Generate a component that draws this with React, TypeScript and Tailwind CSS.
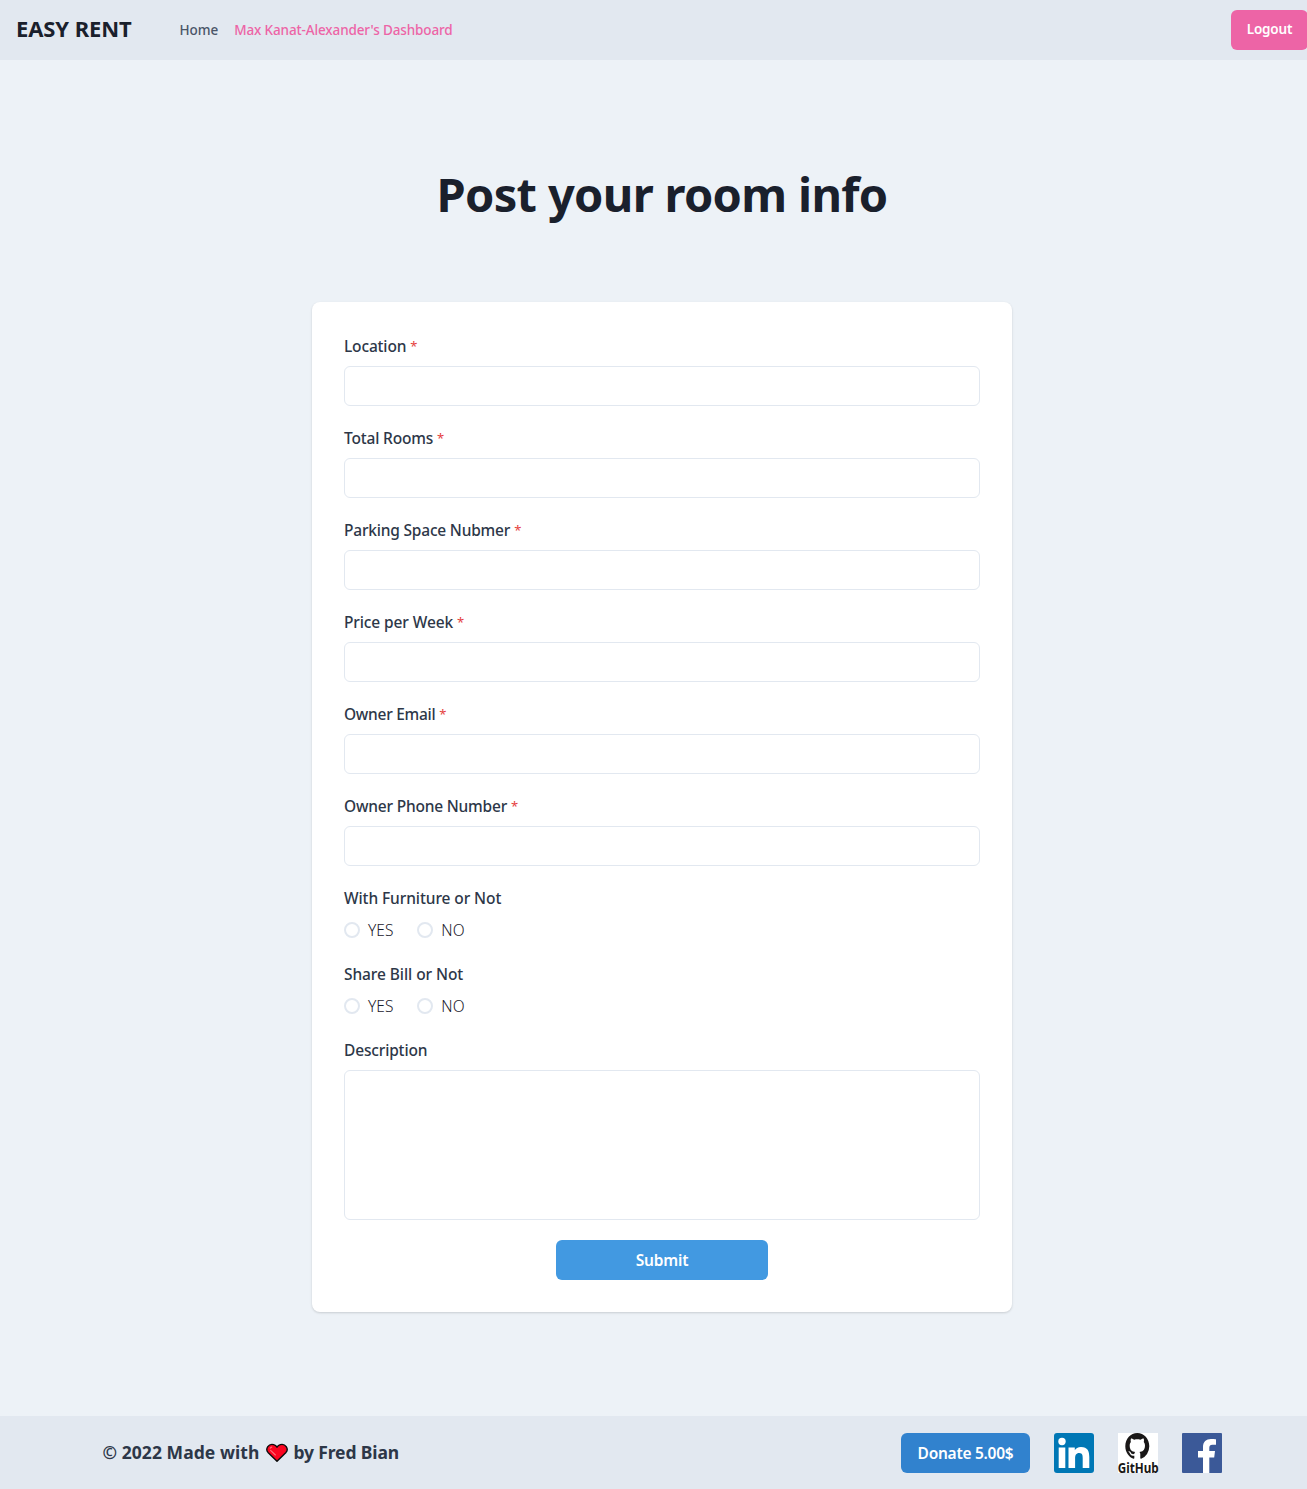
const fields = [
  { label: "Location", spacing: "tracking-[-0.16px]" },
  { label: "Total Rooms", spacing: "tracking-[-0.18px]" },
  { label: "Parking Space Nubmer", spacing: "tracking-[-0.2px]" },
  { label: "Price per Week", spacing: "tracking-[-0.11px]" },
  { label: "Owner Email", spacing: "tracking-[-0.28px]" },
  { label: "Owner Phone Number", spacing: "tracking-[-0.2px]" },
];

const choices = [
  { label: "With Furniture or Not", spacing: "tracking-[-0.09px]" },
  { label: "Share Bill or Not", spacing: "tracking-[-0.08px]" },
];

function Label({ text, spacing, required }: { text: string; spacing: string; required?: boolean }) {
  return (
    <div className="flex h-6 items-center whitespace-nowrap text-[15.5px] font-medium leading-6 text-[#2d3748]">
      <span className={spacing}>{text}</span>
      {required && <span className="ml-1 text-[13px] font-normal text-[#e53e3e]">*</span>}
    </div>
  );
}

function Radio({ text }: { text: string }) {
  return (
    <label className="flex h-6 items-center gap-2 text-[#1a202c]">
      <span className="size-4 rounded-full border-2 border-[#e2e8f0]" />
      <span className="pt-px text-[15.5px] font-light">{text}</span>
    </label>
  );
}

function Heart() {
  return (
    <svg viewBox="0 0 22 20" className="ml-[7px] mr-[5px] h-5 w-[22px]" aria-label="heart">
      <path
        d="M11 18.3 2 9.4C.7 7.9.6 5.3 1.8 3.6 3.2 1.6 5.6 1.1 7.6 1.6 9.2 2 10.3 3 11 4.2 11.7 3 12.8 2 14.4 1.6c2-.5 4.4 0 5.8 2 1.2 1.7 1.1 4.3-.2 5.8Z"
        fill="#fb0520"
        stroke="#0b0b0b"
        strokeWidth="1.4"
        strokeLinejoin="round"
      />
      <path d="M4.2 5.2c.3-.6.8-1 1.5-1.1M4.6 7.4l4.8 4.6" fill="none" stroke="#ff6f78" strokeWidth="1.1" strokeLinecap="round" />
    </svg>
  );
}

function LinkedIn() {
  return (
    <svg viewBox="0 0 40 40" className="size-10" aria-label="LinkedIn">
      <rect width="40" height="40" rx="3" fill="#0077b5" />
      <circle cx="8" cy="8.5" r="3.7" fill="#fff" />
      <path
        d="M4.7 14.5h6.6V35H4.7zM14.5 14.5h6.3v2.7c1-1.8 3.1-3.3 6.2-3.3 6.7 0 8.3 4.2 8.3 10V35h-6.6v-9.8c0-2.5-.1-5.3-3.4-5.3s-4.2 2.5-4.2 5.1V35h-6.6z"
        fill="#fff"
      />
    </svg>
  );
}

function GitHub() {
  return (
    <svg viewBox="0 0 40 40" className="size-10 overflow-visible" aria-label="GitHub">
      <rect width="40" height="40" fill="#fff" />
      <g transform="translate(7.3 0) scale(1.5 1.65)" fill="#191717">
        <path
          fillRule="evenodd"
          d="M8 0C3.58 0 0 3.58 0 8c0 3.54 2.29 6.53 5.47 7.59.4.07.55-.17.55-.38 0-.19-.01-.82-.01-1.49-2.01.37-2.53-.49-2.69-.94-.09-.23-.48-.94-.82-1.13-.28-.15-.68-.52-.01-.53.63-.01 1.08.58 1.23.82.72 1.21 1.87.87 2.33.66.07-.52.28-.87.51-1.07-1.78-.2-3.64-.89-3.64-3.95 0-.87.31-1.59.82-2.15-.08-.2-.36-1.02.08-2.12 0 0 .67-.21 2.2.82.64-.18 1.32-.27 2-.27s1.36.09 2 .27c1.53-1.04 2.2-.82 2.2-.82.44 1.1.16 1.92.08 2.12.51.56.82 1.27.82 2.15 0 3.07-1.87 3.75-3.65 3.95.29.25.54.73.54 1.48 0 1.07-.01 1.93-.01 2.2 0 .21.15.46.55.38A8.01 8.01 0 0 0 16 8c0-4.42-3.58-8-8-8Z"
        />
      </g>
      <text
        x="-0.3"
        y="39.6"
        textLength="41"
        lengthAdjust="spacingAndGlyphs"
        fill="#191717"
        className="font-['Noto_Sans'] text-[15px] font-bold"
      >
        GitHub
      </text>
    </svg>
  );
}

function Facebook() {
  return (
    <svg viewBox="0 0 40 40" className="size-10" aria-label="Facebook">
      <rect width="40" height="40" rx="1" fill="#3b5998" />
      <path d="M21 40V24.5h-5V18h5v-4c0-5.2 3.2-8 7.9-8 2.2 0 4.1.2 5.1.3v5.5h-3.5c-2.7 0-3.2 1.3-3.2 3.2v3H33l-.8 6.5h-4.9V40Z" fill="#fff" />
    </svg>
  );
}

export default function App() {
  return (
    <div className="flex h-[1489px] w-full flex-col overflow-hidden bg-[#edf2f7] font-['Noto_Sans','Open_Sans',sans-serif]">
      <header className="flex h-[60px] shrink-0 items-center bg-[#e2e8f0] pl-4">
        <a className="w-[163.5px] pb-[3px] text-[22px] font-bold tracking-[-0.1px] text-[#1a202c]">EASY RENT</a>
        <nav className="flex flex-1 items-center gap-4 whitespace-nowrap text-[13.5px] font-medium">
          <a className="tracking-[-0.05px] text-[#4a5568]">Home</a>
          <a className="tracking-[-0.13px] text-[#ed64a6]">Max Kanat-Alexander's Dashboard</a>
        </nav>
        <button className="-mr-px h-10 w-[77px] rounded-md bg-[#ed64a6] pb-0.5 text-[13.5px] font-semibold tracking-[-0.15px] text-white">
          Logout
        </button>
      </header>

      <main className="flex flex-1 flex-col items-center pl-[17px]">
        <h1 className="mt-[105px] whitespace-nowrap text-[47px] font-bold leading-[58px] tracking-[-0.67px] text-[#1a202c]">
          Post your room info
        </h1>
        <form className="mt-[79px] flex h-[1010px] w-[700px] flex-col gap-5 rounded-lg bg-white p-8 shadow-[0_1px_3px_0_rgba(0,0,0,0.1),0_1px_2px_0_rgba(0,0,0,0.06)]">
          {fields.map((f) => (
            <div key={f.label} className="flex flex-col gap-2">
              <Label text={f.label} spacing={f.spacing} required />
              <input className="h-10 w-full rounded-md border border-[#e2e8f0] px-4 outline-none" />
            </div>
          ))}
          {choices.map((c) => (
            <div key={c.label} className="flex flex-col gap-2">
              <Label text={c.label} spacing={c.spacing} />
              <div className="flex gap-6">
                <Radio text="YES" />
                <Radio text="NO" />
              </div>
            </div>
          ))}
          <div className="flex flex-col gap-2">
            <Label text="Description" spacing="tracking-[-0.16px]" />
            <textarea className="h-[150px] w-full resize-none rounded-md border border-[#e2e8f0] px-4 py-2 outline-none" />
          </div>
          <button className="h-10 w-[212px] self-center rounded-md bg-[#4299e1] pt-0.5 text-[15.5px] font-semibold tracking-[-0.2px] text-white">
            Submit
          </button>
        </form>
      </main>

      <footer className="flex h-[73px] shrink-0 items-center justify-between bg-[#e2e8f0] pl-[102.5px] pr-[85px]">
        <p className="flex items-center whitespace-nowrap text-[17.5px] font-bold text-[#2d3748]">
          <span className="tracking-[0.06px]">© 2022 Made with</span>
          <Heart />
          <span className="tracking-[-0.12px]">by Fred Bian</span>
        </p>
        <div className="flex items-center gap-6">
          <button className="h-10 w-[129px] rounded-md bg-[#3182ce] pt-0.5 text-[15.5px] font-semibold tracking-[-0.27px] text-white">
            Donate 5.00$
          </button>
          <LinkedIn />
          <GitHub />
          <Facebook />
        </div>
      </footer>
    </div>
  );
}
